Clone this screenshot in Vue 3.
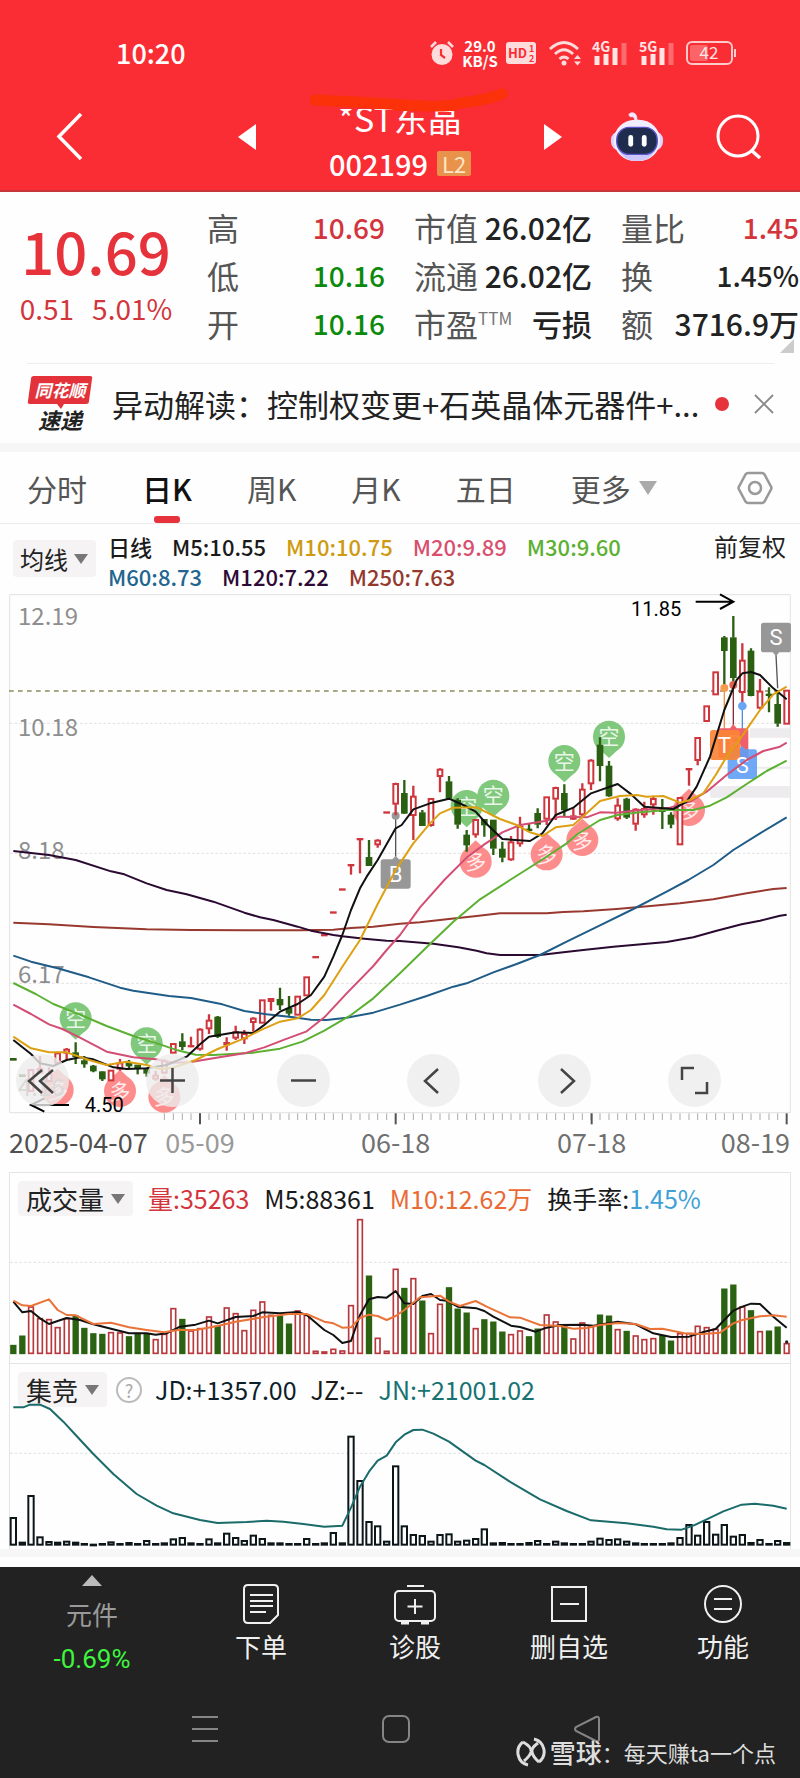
<script setup>
import { ref } from 'vue'

const quotes = [
  { label: '高', value: '10.69', tone: 'up' },
  { label: '市值', value: '26.02亿', mixed: true },
  { label: '量比', value: '1.45', tone: 'up' },
  { label: '低', value: '10.16', tone: 'down' },
  { label: '流通', value: '26.02亿', mixed: true },
  { label: '换', value: '1.45%' },
  { label: '开', value: '10.16', tone: 'down' },
  { label: '市盈', sup: 'TTM', value: '亏损', mixed: true },
  { label: '额', value: '3716.9万', mixed: true },
]

const tabs = ['分时', '日K', '周K', '月K', '五日']
const activeTab = ref('日K')

const averages = [
  { text: '日线', tone: 'ink' },
  { text: 'M5:10.55', tone: 'ink' },
  { text: 'M10:10.75', tone: 'gold' },
  { text: 'M20:9.89', tone: 'pink' },
  { text: 'M30:9.60', tone: 'green' },
  { text: 'M60:8.73', tone: 'blue' },
  { text: 'M120:7.22', tone: 'plum' },
  { text: 'M250:7.63', tone: 'brown' },
]

const STEP = 80 / 3
const barX = (i) => Math.round(40 + i * STEP)

// Each candle: colour, high, body top, body bottom, low
const candles = [
  ['g', 1435, 1435, 1441, 1441], ['g', 1484, 1484, 1490, 1490], ['r', 1468, 1468, 1535, 1535], ['r', 1428, 1465, 1480, 1480],
  ['r', 1462, 1480, 1505, 1505], ['r', 1415, 1418, 1450, 1450], ['r', 1404, 1407, 1420, 1440], ['g', 1387, 1418, 1430, 1452],
  ['g', 1428, 1442, 1452, 1463], ['g', 1455, 1458, 1473, 1477], ['g', 1474, 1475, 1497, 1503], ['r', 1470, 1470, 1503, 1503],
  ['r', 1437, 1448, 1468, 1472], ['g', 1440, 1448, 1458, 1465], ['g', 1455, 1455, 1463, 1483], ['g', 1463, 1468, 1480, 1490],
  ['r', 1472, 1485, 1498, 1502], ['r', 1438, 1442, 1480, 1482], ['r', 1390, 1390, 1420, 1420], ['g', 1360, 1385, 1400, 1410],
  ['r', 1370, 1396, 1401, 1402], ['r', 1345, 1347, 1408, 1412], ['r', 1303, 1320, 1347, 1362], ['g', 1308, 1311, 1370, 1374],
  ['r', 1372, 1387, 1395, 1412], ['r', 1337, 1355, 1375, 1380], ['r', 1350, 1360, 1377, 1392], ['r', 1312, 1314, 1328, 1355],
  ['r', 1259, 1259, 1330, 1330], ['r', 1255, 1255, 1265, 1292], ['g', 1223, 1258, 1275, 1290], ['g', 1248, 1285, 1300, 1307],
  ['r', 1248, 1248, 1306, 1306], ['r', 1190, 1190, 1248, 1248], ['r', 1129, 1129, 1134, 1134], ['r', 1063, 1063, 1068, 1068],
  ['r', 995, 995, 1000, 1000], ['r', 926, 926, 931, 931], ['r', 853, 853, 857, 884], ['r', 775, 775, 780, 880],
  ['g', 780, 832, 857, 857], ['r', 778, 780, 795, 803], ['r', 695, 695, 700, 700], ['r', 608, 610, 673, 706],
  ['g', 600, 640, 700, 702], ['r', 617, 648, 707, 780], ['g', 690, 698, 737, 738], ['r', 655, 655, 737, 740],
  ['r', 565, 567, 590, 637], ['g', 588, 605, 655, 657], ['g', 655, 660, 733, 746], ['g', 750, 765, 795, 815],
  ['r', 717, 718, 765, 773], ['g', 717, 718, 735, 770], ['g', 720, 720, 805, 825], ['g', 785, 807, 832, 847],
  ['r', 768, 785, 840, 842], ['r', 710, 738, 792, 800], ['g', 732, 747, 752, 755], ['g', 685, 700, 733, 745],
  ['r', 650, 650, 718, 735], ['r', 620, 622, 658, 720], ['g', 613, 640, 690, 710], ['r', 685, 707, 718, 720],
  ['r', 610, 627, 705, 710], ['r', 538, 540, 612, 630], ['g', 472, 495, 557, 604], ['g', 543, 558, 648, 650],
  ['r', 655, 675, 717, 722], ['g', 653, 657, 712, 717], ['r', 685, 687, 733, 752], ['r', 665, 685, 705, 713],
  ['r', 647, 655, 675, 704], ['g', 657, 688, 695, 747], ['g', 697, 705, 733, 745], ['r', 652, 652, 795, 795],
  ['r', 565, 565, 569, 617], ['r', 472, 472, 542, 556], ['r', 377, 377, 425, 425], ['r', 275, 275, 345, 345],
  ['g', 168, 173, 212, 322], ['g', 108, 173, 293, 310], ['r', 190, 240, 338, 372], ['g', 205, 213, 347, 349],
  ['r', 297, 333, 385, 388], ['g', 322, 342, 347, 397], ['g', 330, 373, 430, 440], ['r', 330, 330, 433, 433],
]

const priceLines = [
  { tone: 'brown', points: '40,1028 147,1033 280,1041 440,1048 573,1050 740,1051 900,1051 1000,1049 1053,1044 1120,1040 1200,1031 1260,1027 1340,1018 1430,1008 1500,1000 1640,1000 1690,996 1750,994 1850,987 1960,977 2040,970 2140,958 2240,940 2320,927 2360,924' },
  { tone: 'plum', points: '40,813 147,825 227,840 333,874 373,883 440,910 500,930 560,943 640,965 733,998 780,1012 820,1020 893,1040 933,1052 1000,1065 1027,1069 1093,1076 1160,1082 1200,1083 1300,1091 1375,1102 1430,1112 1460,1120 1500,1125 1620,1125 1690,1117 1750,1110 1840,1100 2000,1086 2080,1072 2150,1052 2225,1033 2280,1022 2340,1007 2360,1004' },
  { tone: 'blue', points: '40,1127 93,1145 173,1165 267,1192 360,1223 400,1232 507,1248 573,1254 667,1273 733,1293 800,1303 880,1312 933,1319 980,1320 1040,1313 1120,1298 1200,1274 1280,1248 1360,1220 1400,1210 1480,1177 1550,1152 1620,1125 1700,1085 1800,1036 1900,987 2000,935 2065,900 2140,855 2200,810 2280,760 2360,712' },
  { tone: 'green', points: '40,1209 107,1242 160,1272 240,1304 320,1338 400,1368 480,1393 533,1411 587,1424 640,1425 760,1418 840,1406 907,1385 973,1352 1053,1305 1120,1255 1200,1180 1280,1102 1360,1025 1440,958 1530,900 1620,843 1700,790 1733,762 1800,720 1853,705 1920,697 2000,690 2080,690 2130,677 2180,652 2240,612 2300,573 2360,542' },
  { tone: 'pink', points: '40,1274 93,1302 147,1333 187,1347 240,1373 320,1415 400,1432 467,1438 520,1448 573,1446 640,1435 733,1420 793,1402 853,1379 920,1354 973,1312 1040,1240 1120,1158 1160,1110 1200,1065 1260,982 1333,900 1400,833 1453,793 1507,757 1560,735 1640,722 1680,710 1760,712 1800,697 1850,698 1920,690 2010,683 2070,665 2120,635 2180,585 2240,540 2290,513 2340,500 2360,488' },
  { tone: 'ink', points: '40,1380 93,1422 120,1450 160,1458 200,1440 240,1432 280,1438 340,1462 380,1467 440,1465 500,1455 560,1430 600,1393 627,1370 707,1357 760,1359 790,1337 840,1295 893,1272 933,1245 973,1190 1000,1130 1027,1065 1053,990 1080,925 1100,890 1133,840 1187,745 1205,735 1240,688 1290,670 1347,656 1390,675 1427,695 1460,732 1507,777 1590,783 1627,760 1667,705 1720,683 1773,640 1853,612 1890,640 1933,680 2020,687 2060,665 2090,620 2130,530 2173,390 2210,300 2227,280 2253,276 2280,285 2320,325 2360,358' },
  { tone: 'gold', points: '40,1370 93,1405 147,1417 200,1417 267,1440 320,1455 380,1445 440,1455 480,1467 520,1463 587,1440 653,1407 733,1375 787,1348 840,1325 893,1315 933,1290 973,1245 1027,1160 1080,1080 1133,972 1187,870 1200,850 1240,790 1290,730 1320,700 1360,683 1430,682 1500,717 1550,735 1590,757 1627,768 1667,742 1720,735 1760,700 1800,663 1860,648 1910,645 1940,650 1990,648 2040,668 2070,660 2110,640 2147,585 2180,530 2227,467 2280,390 2320,343 2360,320' },
]

const bears = [[227, 1315], [440, 1390], [1400, 678], [1480, 647], [1693, 543], [1827, 470]]
const bulls = [[173, 1530], [360, 1533], [493, 1550], [1427, 845], [1640, 823], [1747, 780], [2067, 690]]

const priceLabels = [
  [54, 135, '12.19'], [54, 468, '10.18'], [54, 837, '8.18'], [54, 1208, '6.17'], [54, 1548, '4.16'],
]

const minorTicks = Array.from({ length: 70 }, (_, i) => barX(i + 17))
const majorTicks = [600, 1187, 1775, 2360]

const volume = [
  'g556', 'g528', 'r440', 'r475', 'r478', 'r502', 'r475', 'g468', 'g505', 'g521', 'g523', 'r517', 'r518', 'g530', 'g520', 'g522',
  'r538', 'r522', 'r445', 'g478', 'r512', 'r505', 'r470', 'g498', 'r443', 'r460', 'r511', 'r450', 'r425', 'r465', 'g468', 'g492',
  'r452', 'r465', 'r573', 'r575', 'r567', 'r572', 'r436', 'r178', 'g348', 'r534', 'r573', 'r327', 'g385', 'r355', 'g423', 'r520',
  'r432', 'g383', 'g447', 'g459', 'r505', 'g479', 'g486', 'g516', 'r523', 'r512', 'g530', 'g507', 'r464', 'r485', 'g500', 'r536',
  'r488', 'r500', 'g465', 'g468', 'r508', 'g514', 'r527', 'r538', 'r535', 'g527', 'g543', 'r520', 'r520', 'r498', 'r502', 'r507',
  'g387', 'g375', 'r440', 'g452', 'r514', 'g513', 'g501', 'r550',
].map((s, i) => ({ x: barX(i), tone: s[0], top: Number(s.slice(1)) }))

const auction = [
  472, 546, 406, 530, 544, 546, 543, 546, 550, 552, 550, 545, 550, 547, 550, 541, 550, 548, 536, 532, 548, 550,
  536, 548, 519, 532, 541, 525, 535, 548, 548, 550, 550, 535, 550, 548, 517, 548, 228, 361, 484, 497, 543, 317,
  497, 523, 526, 543, 523, 521, 543, 540, 535, 506, 548, 547, 550, 550, 547, 541, 550, 543, 548, 550, 550, 543,
  534, 538, 536, 543, 548, 550, 550, 550, 548, 532, 493, 525, 484, 522, 493, 528, 523, 547, 538, 550, 541, 547,
].map((top, i) => ({ x: barX(i), top }))
</script>

<template>
  <main class="page">
    <header class="head">
      <div class="status">
        <span class="clock">10:20</span>
        <div class="signals">
          <svg class="alarm" viewBox="0 0 24 26" aria-hidden="true">
            <path d="M1 7 6 2M23 7 18 2" stroke="#ffdcdc" stroke-width="2.5" />
            <circle cx="12" cy="14.500" r="10.500" fill="#ffdcdc" />
            <path d="M11 9v6l4 3" fill="none" stroke="#fa2d34" stroke-width="2.200" />
          </svg>
          <span class="speed"><span>29.0</span><span>KB/S</span></span>
          <svg class="hd" viewBox="0 0 30 22">
            <rect width="30" height="22" rx="3" fill="#ffdcdc" />
            <text x="2" y="16" font-size="13" font-weight="700">HD</text>
            <text x="23" y="10" font-size="9" font-weight="700">1</text>
            <text x="23" y="20" font-size="9" font-weight="700">2</text>
          </svg>
          <svg class="wifi" viewBox="0 0 34 26" aria-hidden="true">
            <g fill="none" stroke="#ffdcdc" stroke-width="3">
              <path d="M1 9Q15-4 29 9M6 14q9-8.500 18 0M10.500 19q4.500-4 9 0" />
            </g>
            <circle cx="15" cy="23" r="2.500" fill="#ffdcdc" />
            <path d="m25 19 3.500-4 3.500 4zM25 21.500h7l-3.500 4z" fill="#ffdcdc" />
          </svg>
          <svg v-for="g in ['4G', '5G']" :key="g" class="cell" viewBox="0 0 36 30">
            <text class="gen" x="0" y="14" font-size="14" font-weight="700">{{ g }}</text>
            <path d="M5 18v9M14 16v11M23 10v17" stroke="#ffe4e4" stroke-width="5" />
            <path d="M32 5v22" stroke="#fb6a6e" stroke-width="5" />
          </svg>
          <svg class="battery" viewBox="0 0 50 28">
            <rect x="1" y="3" width="45" height="22" rx="5" fill="none" stroke="#ffcaca" stroke-width="2" />
            <rect x="4" y="6" width="18" height="16" rx="2" fill="#fc6468" />
            <path d="M49 10v8" stroke="#ffcaca" stroke-width="2" />
            <text class="gen" x="23" y="20" font-size="17" text-anchor="middle">42</text>
          </svg>
        </div>
      </div>
      <nav class="bar">
        <div class="side left">
          <button class="plain" aria-label="返回">
            <svg width="28" height="50" viewBox="0 0 28 50"><path d="M25 2 3 24.500 25 47" fill="none" stroke="#fff" stroke-width="3.500" /></svg>
          </button>
          <button class="plain" aria-label="上一只">
            <svg width="18" height="26" viewBox="0 0 18 26"><path d="M18 0v26L0 13z" fill="#fff" /></svg>
          </button>
        </div>
        <div class="title">
          <h1>*ST东晶</h1>
          <p><span>002199</span><b>L2</b></p>
          <svg class="mark" viewBox="0 0 200 30" aria-hidden="true">
            <path d="M20 8h150v13H20z" fill="#fa2d34" />
            <path d="M4 12Q50 14 95 17T150 15Q172 13 192 6" fill="none" stroke="#fb3109" stroke-width="11" stroke-linecap="round" />
            <path d="M85 20h60" stroke="#fb3109" stroke-width="6" />
          </svg>
        </div>
        <div class="side right">
          <button class="plain" aria-label="下一只">
            <svg width="18" height="26" viewBox="0 0 18 26"><path d="M0 0v26l18-13z" fill="#fff" /></svg>
          </button>
          <button class="plain robot" aria-label="智能助手">
            <svg width="54" height="52" viewBox="0 0 56 52">
              <path d="M26 10q0-6-5-5-3-3 1-4 6-1 6 8" fill="#f5eaff" stroke="#efe2ff" />
              <rect x="1" y="20" width="54" height="20" rx="9" fill="#dcd6ff" />
              <rect x="4" y="8" width="48" height="43" rx="22" fill="#f1eeff" />
              <path d="M8 38q20 14 40 0-6 13-20 13T8 38" fill="#cdc6fb" />
              <rect x="7" y="16" width="42" height="28" rx="13" fill="#1f2c4d" stroke="#5a56c8" stroke-width="1.500" />
              <rect x="19" y="24" width="5" height="12" rx="2.500" fill="#fff" />
              <rect x="33" y="24" width="5" height="12" rx="2.500" fill="#fff" />
            </svg>
          </button>
          <button class="plain search" aria-label="搜索">
            <svg width="46" height="46" viewBox="0 0 46 46"><circle cx="22" cy="22" r="20" fill="none" stroke="#fff" stroke-width="3" /><path d="m35 36 9 8" stroke="#fff" stroke-width="3.500" /></svg>
          </button>
        </div>
      </nav>
    </header>

    <section class="quote">
      <div class="last">
        <strong>10.69</strong>
        <p><span>0.51</span><span>5.01%</span></p>
      </div>
      <dl class="facts">
        <div v-for="q in quotes" :key="q.label">
          <dt>{{ q.label }}<sup v-if="q.sup">{{ q.sup }}</sup></dt>
          <dd :class="[q.tone, { mixed: q.mixed }]">{{ q.value }}</dd>
        </div>
      </dl>
      <i class="corner"></i>
    </section>

    <section class="news">
      <div class="brand">
        <svg class="bubble" viewBox="0 0 66 34" aria-hidden="true"><path d="M7 1h56q3 0 2 3l-3 22q0 3-3 3H37l-3 5-4-5H3q-3 0-2-3L4 4q0-3 3-3z" fill="#e3323a" /></svg>
        <span class="tag">同花顺</span>
        <span class="sub">速递</span>
      </div>
      <a href="#">异动解读：控制权变更+石英晶体元器件+...</a>
      <i class="dot"></i>
      <button class="plain" aria-label="关闭">
        <svg width="20" height="20" viewBox="0 0 20 20"><path d="m1 1 18 18M19 1 1 19" stroke="#888" stroke-width="1.800" /></svg>
      </button>
    </section>

    <nav class="tabs">
      <button v-for="t in tabs" :key="t" :class="{ on: t === activeTab }" @click="activeTab = t">{{ t }}</button>
      <button class="more">更多<svg width="18" height="14" viewBox="0 0 18 14"><path d="M0 0h18L9 14z" fill="#aaa" /></svg></button>
      <button class="gear" aria-label="设置">
        <svg width="36" height="34" viewBox="0 0 36 34"><path d="M11 2h14q1.500 0 2.500 1.500l6.500 12q1 1.500 0 3l-6.500 12Q26.500 32 25 32H11q-1.500 0-2.500-1.500L2 18.500q-1-1.500 0-3l6.500-12Q9.500 2 11 2z" fill="none" stroke="#999" stroke-width="2.500" /><circle cx="18" cy="17" r="6" fill="none" stroke="#999" stroke-width="2.500" /></svg>
      </button>
    </nav>

    <section class="legend">
      <label class="pick small">
        <select aria-label="指标"><option>均线</option></select>
        <svg width="14" height="10" viewBox="0 0 14 10"><path d="M0 0h14L7 10z" fill="#777" /></svg>
      </label>
      <div class="items">
        <span v-for="a in averages" :key="a.text" :class="a.tone">{{ a.text }}</span>
      </div>
      <button class="plain adjust">前复权</button>
    </section>

    <section class="kline">
      <svg class="plot" viewBox="27 42 2346 1734">
        <path class="frame" d="M29 1598V44H2371V1598z" />
        <path class="shade" d="M2250 445h120v28h-120zM2110 560h260v6h-260zM2130 618h240v35h-240z" />
        <path class="grid" d="M30 430H2370M30 820H2370M30 1210H2370" />
        <path class="current" d="M27 333H2370" />
        <g class="bear">
          <g v-for="(m, i) in bears" :key="i">
            <path :d="`M${m[0] - 30} ${m[1] + 36}L${m[0]} ${m[1] + 64}L${m[0] + 30} ${m[1] + 36}z`" />
            <circle :cx="m[0]" :cy="m[1]" r="48" />
            <text :x="m[0]" :y="m[1] + 23">空</text>
          </g>
        </g>
        <g class="bull">
          <g v-for="(m, i) in bulls" :key="i">
            <path :d="`M${m[0] - 30} ${m[1] - 36}L${m[0]} ${m[1] - 64}L${m[0] + 30} ${m[1] - 36}z`" />
            <circle :cx="m[0]" :cy="m[1]" r="48" />
            <text :x="m[0]" :y="m[1] + 23">多</text>
          </g>
        </g>
        <g class="flag">
          <path d="M1187 707V830M2328 225 2333 325" stroke="#555" />
          <circle cx="1187" cy="707" r="12" fill="#999" />
          <path d="M1150 838h27l10-10 10 10h27q8 0 8 8v72q0 8-8 8h-74q-8 0-8-8v-72q0-8 8-8z" fill="#979797" />
          <text x="1187" y="906">B</text>
          <path d="M2291 128h74q8 0 8 8v73q0 8-8 8h-27l-10 11-10-11h-27q-8 0-8-8v-73q0-8 8-8z" fill="#979797" />
          <text x="2328" y="196">S</text>
        </g>
        <g class="price-labels">
          <text v-for="l in priceLabels" :key="l[2]" :x="l[0]" :y="l[1]">{{ l[2] }}</text>
        </g>
        <g v-for="(c, i) in candles" :key="i" :class="['candle', c[0]]">
          <path :d="`M${barX(i)} ${c[1]}V${c[2]}M${barX(i)} ${c[3]}V${c[4]}`" />
          <rect :x="barX(i) - 7" :y="c[2] + 2" width="14" :height="Math.max(c[3] - c[2] - 4, 1)" />
        </g>
        <g class="flag">
          <path d="M2173 325V450" stroke="#f5903c" />
          <path d="M2200 315V435" stroke="#8c2a3a" />
          <path d="M2227 378V510" stroke="#4d8fd6" />
          <circle cx="2173" cy="324" r="12" fill="#f79a4d" />
          <circle cx="2200" cy="315" r="12" fill="#e8604f" />
          <circle cx="2227" cy="378" r="13" fill="#6aa5f5" />
          <path d="M2163 445h27l10-13 10 13h27q8 0 8 8v74q0 8-8 8h-74q-8 0-8-8v-74q0-8 8-8z" fill="#f0606b" />
          <text x="2205" y="512" opacity=".6">B</text>
          <path d="M2191 508h26l10-10 10 10h26q8 0 8 8v73q0 8-8 8h-72q-8 0-8-8v-73q0-8 8-8z" fill="#5e9ff5" opacity=".9" />
          <rect x="2130" y="450" width="90" height="90" rx="8" fill="#fb8436" opacity=".92" />
          <text x="2173" y="519">T</text>
          <text x="2227" y="578">S</text>
        </g>
        <polyline v-for="l in priceLines" :key="l.tone" :class="['line', l.tone]" :points="l.points" />
        <g class="extreme">
          <text x="1893" y="108">11.85</text>
          <path d="M2087 65H2198M2160 43l40 22-40 22" />
          <text x="254" y="1595">4.50</text>
          <path d="M207 1575H95M133 1555l-40 20 40 20" />
        </g>
        <path class="tick" v-for="x in minorTicks" :key="x" :d="`M${x} 1600v20`" />
        <path class="tick major" v-for="x in majorTicks" :key="x" :d="`M${x} 1600v33`" />
        <g class="dates">
          <text class="first" x="27" y="1719">2025-04-07</text>
          <text class="dim" x="600" y="1719" text-anchor="middle">05-09</text>
          <text x="1187" y="1719" text-anchor="middle">06-18</text>
          <text x="1775" y="1719" text-anchor="middle">07-18</text>
          <text x="2370" y="1719" text-anchor="end">08-19</text>
        </g>
      </svg>
      <div class="tools">
        <button aria-label="最早"><svg viewBox="0 0 53 53"><path d="M26 16 13 27l13 12M37 16 24 27l13 12" /></svg></button>
        <button aria-label="放大"><svg viewBox="0 0 53 53"><path d="M14 26.500h25M26.500 14v25" /></svg></button>
        <button aria-label="缩小"><svg viewBox="0 0 53 53"><path d="M14 26.500h25" /></svg></button>
        <button aria-label="左移"><svg viewBox="0 0 53 53"><path d="M31 15 18 27l13 12" /></svg></button>
        <button aria-label="右移"><svg viewBox="0 0 53 53"><path d="m23 15 13 12-13 12" /></svg></button>
        <button aria-label="全屏"><svg viewBox="0 0 53 53"><path d="M14 26V14h12M39 28v11H27" /></svg></button>
      </div>
    </section>

    <section class="panel">
      <div class="caption">
        <label class="pick">
          <select aria-label="副图一"><option>成交量</option></select>
          <svg width="14" height="10" viewBox="0 0 14 10"><path d="M0 0h14L7 10z" fill="#777" /></svg>
        </label>
        <span class="red">量:35263</span>
        <span class="ink">M5:88361</span>
        <span class="orange">M10:12.62万</span>
        <span class="ink">换手率:<span class="sky">1.45%</span></span>
      </div>
      <svg class="plot" viewBox="30 168 2340 441">
        <path class="grid" d="M30 307H2370" />
        <rect v-for="b in volume" :key="b.x" :class="['vol', b.tone]" :x="b.x - 7" :y="b.top + 1" width="14" :height="Math.max(579 - b.top, 3)" />
        <polyline class="line ink" points="40,425 67,457 93,453 120,475 147,492 173,483 200,474 240,480 280,493 333,506 387,520 440,520 467,524 500,520 540,500 587,494 627,482 653,490 707,471 760,468 787,457 840,460 893,456 920,465 973,510 1000,525 1027,549 1053,543 1080,465 1107,418 1133,411 1160,413 1187,393 1213,430 1240,432 1267,408 1293,402 1320,420 1340,422 1373,440 1430,445 1453,453 1480,470 1533,497 1560,501 1607,515 1640,503 1680,495 1747,494 1780,497 1853,485 1907,493 1960,520 2013,531 2067,530 2107,517 2147,507 2173,480 2200,452 2227,440 2253,431 2280,432 2320,470 2360,503" />
        <polyline class="line orange" points="40,422 67,436 93,438 147,418 173,450 200,465 227,466 280,492 333,488 387,502 440,510 493,517 533,510 587,510 653,498 707,485 787,472 867,462 920,462 973,485 1000,490 1027,503 1053,502 1080,474 1107,464 1133,468 1160,480 1187,468 1213,450 1260,412 1320,407 1347,425 1380,438 1427,423 1460,440 1530,472 1560,473 1620,495 1680,498 1720,506 1760,504 1800,495 1853,489 1907,492 1950,507 1987,506 2053,520 2107,522 2160,518 2200,490 2227,480 2280,469 2320,466 2360,470" />
        <circle cx="2360" cy="546" r="5" fill="#222" />
      </svg>
    </section>

    <section class="panel">
      <div class="caption auction">
        <label class="pick">
          <select aria-label="副图二"><option>集竞</option></select>
          <svg width="14" height="10" viewBox="0 0 14 10"><path d="M0 0h14L7 10z" fill="#777" /></svg>
        </label>
        <button class="help" aria-label="帮助">?</button>
        <span class="navy">JD:+1357.00</span>
        <span class="ink jz">JZ:--</span>
        <span class="teal">JN:+21001.02</span>
      </div>
      <svg class="plot" viewBox="30 141 2340 426">
        <path class="grid" d="M30 280H2370" />
        <rect v-for="b in auction" :key="b.x" class="call" :x="b.x - 8" :y="b.top + 2" width="16" :height="Math.max(552 - b.top, 2)" />
        <polyline class="line teal" points="40,142 70,142 90,134 120,134 150,147 190,185 227,225 280,282 340,342 410,402 470,437 520,460 600,480 653,489 740,486 800,482 850,485 910,492 973,500 1027,497 1053,443 1080,380 1107,335 1133,302 1160,287 1187,247 1213,224 1240,210 1267,209 1300,221 1347,245 1427,302 1453,315 1533,367 1620,418 1700,453 1773,481 1880,490 1960,500 2000,508 2045,509 2080,497 2120,478 2170,454 2225,434 2265,431 2320,437 2360,446" />
      </svg>
    </section>
    <div class="band"></div>

    <footer class="foot">
      <nav class="actions">
        <button class="sector">
          <svg width="20" height="11" viewBox="0 0 20 11"><path d="M10 0 20 11H0z" fill="#bbb" /></svg>
          <span>元件</span><em>-0.69%</em>
        </button>
        <button>
          <svg width="38" height="42" viewBox="0 0 38 42"><path d="M6 2h26q4 0 4 4v26l-8 8H6q-4 0-4-4V6q0-4 4-4z" /><path d="M8 12h23M8 18h23M8 23h23M8 29h16" /></svg>下单
        </button>
        <button>
          <svg width="44" height="42" viewBox="0 0 44 42"><rect x="2" y="8" width="40" height="30" rx="4" /><path d="M14 3h17M22 16v15M14.500 23.500h15" /><path d="M8 40h8M28 40h8" stroke-width="3" /></svg>诊股
        </button>
        <button>
          <svg width="38" height="42" viewBox="0 0 38 42"><path d="M2 4h34v34H2zM10 21h19" /></svg>删自选
        </button>
        <button>
          <svg width="40" height="42" viewBox="0 0 40 42"><circle cx="20" cy="21" r="18" /><path d="M11 16h18M11 26h18" /></svg>功能
        </button>
      </nav>
      <nav class="system">
        <button class="plain" aria-label="最近任务"><svg width="28" height="28" viewBox="0 0 28 28"><path d="M1 2h26M1 14h26M1 26h26" /></svg></button>
        <button class="plain" aria-label="主页"><svg width="28" height="28" viewBox="0 0 28 28"><rect x="1" y="1" width="26" height="26" rx="6" /></svg></button>
        <button class="plain" aria-label="后退"><svg width="28" height="28" viewBox="0 0 28 28"><path d="M26 4v20q0 3-3 2L3 16q-2-2 0-4L23 2q3-1 3 2z" /></svg></button>
      </nav>
      <p class="credit">
        <svg width="30" height="30" viewBox="0 0 30 30">
          <g fill="none" stroke="#ddd">
            <path d="M12 28A13 13 0 0 1 7 5M18 2a13 13 0 0 1 5 23" stroke-width="3" />
            <path d="M7 5q9 5 8 10-1 4-7 9M22 6q-7 5-6 9 1 5 7 10" stroke-width="3" />
          </g>
        </svg>
        <b>雪球</b><span>：每天赚ta一个点</span>
      </p>
    </footer>
  </main>
</template>

<style>
body {
  margin: 0;
  background: #fff;
}
</style>

<style scoped>
.page {
  font-family: 'Noto Sans CJK SC', sans-serif;
  color: #222;
  background: #fefefe;
  overflow: hidden;
}
button,
select {
  font: inherit;
  color: inherit;
  background: none;
  border: 0;
  padding: 0;
  margin: 0;
  appearance: none;
}
svg {
  display: block;
  flex: none;
}
p,
h1,
dl,
dd {
  margin: 0;
}

.head {
  background: #fa2d34;
  color: #fff;
  border-bottom: 2px solid #c8363c;
}
.status {
  height: 84px;
  padding: 22px 64px 0 116px;
  box-sizing: border-box;
  display: flex;
  justify-content: space-between;
  align-items: center;
}
.clock {
  font-size: 27px;
  line-height: 30px;
  font-weight: 500;
}
.signals {
  display: flex;
  align-items: center;
}
.alarm {
  width: 24px;
  height: 26px;
}
.speed {
  display: flex;
  flex-direction: column;
  width: 52px;
  font-size: 15px;
  line-height: 15px;
  font-weight: 700;
  text-align: center;
}
.hd {
  width: 30px;
  height: 22px;
  margin-right: 13px;
}
.hd text {
  fill: #fa2d34;
}
.wifi {
  width: 34px;
  height: 26px;
  margin-right: 9px;
}
.cell {
  width: 36px;
  height: 30px;
  margin-right: 11px;
  overflow: visible;
}
.gen {
  fill: #ffe4e4;
}
.battery {
  width: 50px;
  height: 28px;
  overflow: visible;
}
.bar {
  height: 106px;
  display: grid;
  grid-template-columns: 1fr 288px 1fr;
}
.side {
  display: flex;
  align-items: center;
}
.left {
  justify-content: space-between;
  padding-left: 56px;
}
.right {
  padding-right: 38px;
}
.robot {
  margin-left: 48px;
}
.search {
  margin-left: auto;
}
.title {
  position: relative;
  text-align: center;
  padding-top: 12px;
}
.title h1 {
  font-size: 34px;
  line-height: 44px;
  font-weight: 400;
}
.title p {
  display: flex;
  justify-content: center;
  align-items: center;
  gap: 9px;
  line-height: 46px;
  font-size: 29px;
  font-weight: 500;
}
.title b {
  background: #e9924c;
  color: #ffe6c4;
  font-weight: 400;
  font-size: 22px;
  line-height: 25px;
  width: 34px;
  border-radius: 2px;
}
.mark {
  position: absolute;
  left: 54px;
  top: 4px;
  width: 200px;
  height: 30px;
}

.quote {
  position: relative;
  display: flex;
  padding: 11px 1px 16px 0;
}
.last {
  width: 192px;
  margin-right: 15px;
  text-align: center;
  color: #e6323a;
}
.last strong {
  display: block;
  font-size: 58px;
  line-height: 80px;
  font-weight: 500;
  padding-top: 7px;
}
.last p {
  display: flex;
  justify-content: center;
  gap: 18px;
  font-size: 28px;
  line-height: 36px;
  color: #d2353c;
}
.facts {
  flex: 1;
  display: grid;
  grid-template-columns: repeat(3, 1fr);
  column-gap: 29px;
}
.facts div {
  display: flex;
  justify-content: space-between;
  line-height: 48px;
  height: 48px;
  white-space: nowrap;
}
dt {
  font-size: 32px;
  color: #555;
}
dt sup {
  font-size: 17px;
  line-height: 17px;
  color: #777;
}
dd {
  font-size: 28px;
  font-weight: 500;
}
dd.mixed {
  font-size: 30px;
}
dd.up {
  color: #d2353c;
}
dd.down {
  color: #0b8a0b;
}
.corner {
  position: absolute;
  right: 6px;
  bottom: 10px;
  border: 7px solid;
  border-color: transparent #ccc #ccc transparent;
}

.news {
  display: flex;
  align-items: center;
  height: 79px;
  margin: 0 26px 0 27px;
  border-top: 1px solid #eee;
}
.brand {
  position: relative;
  width: 66px;
  margin-right: 19px;
  display: flex;
  flex-direction: column;
  align-items: center;
  font-weight: 700;
  font-style: italic;
}
.bubble {
  position: absolute;
  left: 0;
  top: 0;
  width: 66px;
  height: 34px;
}
.tag {
  position: relative;
  color: #fff;
  font-size: 17px;
  line-height: 30px;
}
.sub {
  font-size: 22px;
  line-height: 28px;
}
.news a {
  color: #222;
  text-decoration: none;
  font-size: 31px;
  line-height: 40px;
  white-space: nowrap;
  flex: 1;
}
.dot {
  width: 14px;
  height: 14px;
  border-radius: 50%;
  background: #e6323a;
  margin-right: 25px;
}

.tabs {
  display: flex;
  gap: 55px;
  height: 71px;
  padding: 0 27px;
  border-top: 9px solid #f6f6f7;
  border-bottom: 1px solid #ececec;
  font-size: 30px;
  line-height: 70px;
  color: #555;
}
.tabs button {
  position: relative;
  white-space: nowrap;
}
.tabs .on {
  color: #111;
  font-weight: 500;
}
.tabs .on::after {
  content: '';
  position: absolute;
  left: 50%;
  bottom: 0;
  width: 26px;
  height: 7px;
  margin-left: -13px;
  border-radius: 3px;
  background: #e6323a;
}
.tabs .more {
  display: flex;
  align-items: center;
  gap: 8px;
}
.tabs .gear {
  margin-left: auto;
}

.legend {
  display: flex;
  height: 70px;
  padding: 0 14px 0 13px;
  font-size: 22px;
  line-height: 30px;
}
.pick {
  display: flex;
  align-items: center;
  gap: 6px;
  height: 35px;
  padding: 0 8px;
  background: #f5f3f4;
  border-radius: 4px;
  font-size: 26px;
  color: #222;
}
.pick svg {
  pointer-events: none;
}
.pick.small {
  margin: 16px 12px 0 0;
  height: 37px;
  padding: 0 8px 0 7px;
  font-size: 24px;
}
.items {
  flex: 1;
  display: flex;
  flex-wrap: wrap;
  align-content: flex-start;
  column-gap: 20px;
  padding-top: 7px;
  font-weight: 500;
}
.adjust {
  align-self: flex-start;
  padding-top: 7px;
  font-size: 24px;
  line-height: 30px;
}
.ink { color: #1a1a1a; stroke: #111; }
.gold { color: #cf9a10; stroke: #dda012; }
.pink { color: #d9506f; stroke: #d44e74; }
.green { color: #5cb032; stroke: #5cb032; }
.blue { color: #22658f; stroke: #1f5c87; }
.plum { color: #2d0a35; stroke: #2a0a30; }
.brown { color: #95392f; stroke: #98382f; }
.orange { color: #ea6a34; stroke: #ea7338; }
.teal { color: #177372; stroke: #1a6b6a; }
.red { color: #d2353c; }
.sky { color: #3fa0d8; }
.navy { color: #0d1f2b; }

.kline {
  position: relative;
  margin: 0 9px;
}
.plot {
  width: 100%;
  height: auto;
  overflow: visible;
}
.line {
  fill: none;
  stroke-width: 6;
  stroke-linejoin: round;
}
.frame {
  fill: none;
  stroke: #e2e2e2;
  stroke-width: 3;
}
.shade {
  fill: #edebed;
}
.grid {
  stroke: #e0e0e0;
  stroke-width: 3;
  stroke-dasharray: 8 6;
}
.current {
  stroke: #8c8c5c;
  stroke-width: 4;
  stroke-dasharray: 14 13;
}
.candle path {
  stroke-width: 7;
}
.candle rect {
  stroke-width: 6;
}
.candle.r path,
.candle.r rect {
  fill: #fff;
  stroke: #cf353c;
}
.candle.g path,
.candle.g rect {
  fill: #2b5f12;
  stroke: #2b5f12;
}
.bear path,
.bear circle {
  fill: #7fc87c;
}
.bull path,
.bull circle {
  fill: #fd8d8d;
}
.bear text,
.bull text {
  fill: #fff;
  fill-opacity: 0.85;
  font-size: 63px;
  text-anchor: middle;
}
.flag path {
  stroke-width: 4;
}
.flag text {
  fill: #fff;
  font-family: Roboto, sans-serif;
  font-size: 66px;
  text-anchor: middle;
}
.price-labels text {
  fill: #8e8e8e;
  font-size: 72px;
}
.extreme text {
  font-family: Roboto, sans-serif;
  font-size: 60px;
  fill: #000;
}
.extreme path {
  fill: none;
  stroke: #000;
  stroke-width: 6;
}
.tick {
  stroke: #aaa;
  stroke-width: 3;
}
.tick.major {
  stroke: #555;
  stroke-width: 6;
}
.dates text {
  font-size: 81px;
  fill: #707070;
}
.dates .first {
  fill: #505050;
}
.dates .dim {
  fill: #999;
}
.tools {
  position: absolute;
  left: 7px;
  right: 70px;
  bottom: 65px;
  display: flex;
  justify-content: space-between;
}
.tools button {
  width: 53px;
  height: 53px;
  border-radius: 50%;
  background: rgba(236, 236, 236, 0.8);
}
.tools path {
  fill: none;
  stroke: #444;
  stroke-width: 2.5;
}

.panel {
  margin: 0 9px;
  padding-top: 8px;
  border: 1px solid #e4e4e4;
  border-bottom: 0;
}
.caption {
  display: flex;
  align-items: center;
  height: 35px;
  padding-left: 8px;
  gap: 15px;
  font-size: 25px;
  line-height: 35px;
  white-space: nowrap;
}
.auction {
  gap: 0;
}
.help {
  width: 26px;
  height: 26px;
  box-sizing: border-box;
  margin: 0 13px 0 9px;
  border: 2px solid #bbb;
  border-radius: 50%;
  color: #aaa;
  font-size: 18px;
  line-height: 20px;
}
.jz {
  margin-left: 14px;
  min-width: 68px;
}
.vol {
  stroke-width: 5;
}
.vol.r {
  fill: #fff;
  stroke: #b8383d;
}
.vol.g {
  fill: #2b6312;
  stroke: #2b6312;
}
.call {
  fill: #fff;
  stroke: #0c1518;
  stroke-width: 6;
}
.band {
  height: 8px;
  background: #f7f7f7;
  margin-bottom: 10px;
}

.foot {
  position: relative;
  background: #222;
  color: #f0f0f0;
  height: 212px;
}
.actions {
  display: grid;
  grid-template-columns: 184fr repeat(4, 154fr);
  height: 130px;
}
.actions button {
  display: flex;
  flex-direction: column;
  align-items: center;
  font-size: 26px;
  line-height: 34px;
  padding-top: 16px;
  gap: 4px;
}
.actions svg {
  fill: none;
  stroke: #f0f0f0;
  stroke-width: 2;
}
.actions .sector {
  padding-top: 8px;
  gap: 11px;
}
.sector svg {
  stroke: none;
}
.sector span {
  color: #999;
}
.sector em {
  font-style: normal;
  font-family: Roboto, sans-serif;
  color: #3df53d;
}
.system {
  display: flex;
  justify-content: space-between;
  padding: 18px 199px 0 191px;
}
.system svg {
  fill: none;
  stroke: #858585;
  stroke-width: 2;
}
.credit {
  position: absolute;
  right: 24px;
  bottom: 9px;
  display: flex;
  align-items: center;
  color: #ddd;
  font-size: 22px;
  line-height: 36px;
}
.credit b {
  font-weight: 500;
  font-size: 26px;
  margin-left: 4px;
}
</style>
